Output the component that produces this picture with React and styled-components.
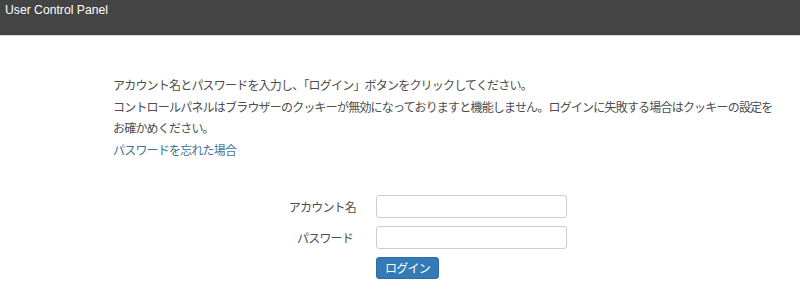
import React from "react";
import styled, { createGlobalStyle } from "styled-components";

const GlobalStyle = createGlobalStyle`
  body {
    margin: 0;
    background: #fff;
    font-family: "Liberation Sans", Arial, "Noto Sans CJK JP", sans-serif;
  }
`;

const Header = styled.header`
  height: 35px;
  background-color: #444;
  border-bottom: 1px solid #d6d6d6;
  color: #fff;
  padding: 0 5px;
`;

const Title = styled.h1`
  margin: 0;
  font-family: "Liberation Sans", Arial, sans-serif;
  font-weight: normal;
  font-size: 12.2px;
  line-height: 21px;
`;

const Content = styled.main`
  padding: 38px 20px 0 113px;
  font-family: "Noto Sans CJK JP", sans-serif;
  font-size: 12px;
  letter-spacing: -0.8px;
  color: #4d4d4d;
`;

const Message = styled.p`
  margin: 0;
  line-height: 21.7px;
`;

const ForgotLink = styled.a`
  display: block;
  line-height: 21.7px;
  color: #3f7497;
  text-decoration: none;
  cursor: pointer;
`;

const Form = styled.form`
  display: grid;
  grid-template-columns: 243px 191px;
  column-gap: 20px;
  row-gap: 8px;
  align-items: center;
  margin-top: 34px;
`;

const Label = styled.label`
  text-align: right;
  padding-right: ${(p) => p.$indent || 0}px;
`;

const Input = styled.input`
  box-sizing: border-box;
  width: 191px;
  height: 23px;
  border: 1px solid #ccc;
  border-radius: 3px;
  padding: 2px 6px;
  font-size: 12px;
  outline: none;
`;

const Button = styled.button`
  grid-column: 2;
  justify-self: start;
  width: 63px;
  height: 22px;
  border: 1px solid #2e6da4;
  border-radius: 3px;
  background-color: #337ab7;
  color: #fff;
  font-family: "Noto Sans CJK JP", sans-serif;
  font-size: 12px;
  letter-spacing: -0.8px;
  padding: 0;
  cursor: pointer;
`;

export default function App() {
  return (
    <>
      <GlobalStyle />
      <Header>
        <Title>User Control Panel</Title>
      </Header>
      <Content>
        <Message>
          アカウント名とパスワードを入力し、「ログイン」ボタンをクリックしてください。
        </Message>
        <Message>
          コントロールパネルはブラウザーのクッキーが無効になっておりますと機能しません。ログインに失敗する場合はクッキーの設定をお確かめください。
        </Message>
        <ForgotLink>パスワードを忘れた場合</ForgotLink>
        <Form onSubmit={(e) => e.preventDefault()}>
          <Label htmlFor="account">アカウント名</Label>
          <Input id="account" type="text" />
          <Label htmlFor="password" $indent={3}>パスワード</Label>
          <Input id="password" type="password" />
          <Button type="submit">ログイン</Button>
        </Form>
      </Content>
    </>
  );
}
